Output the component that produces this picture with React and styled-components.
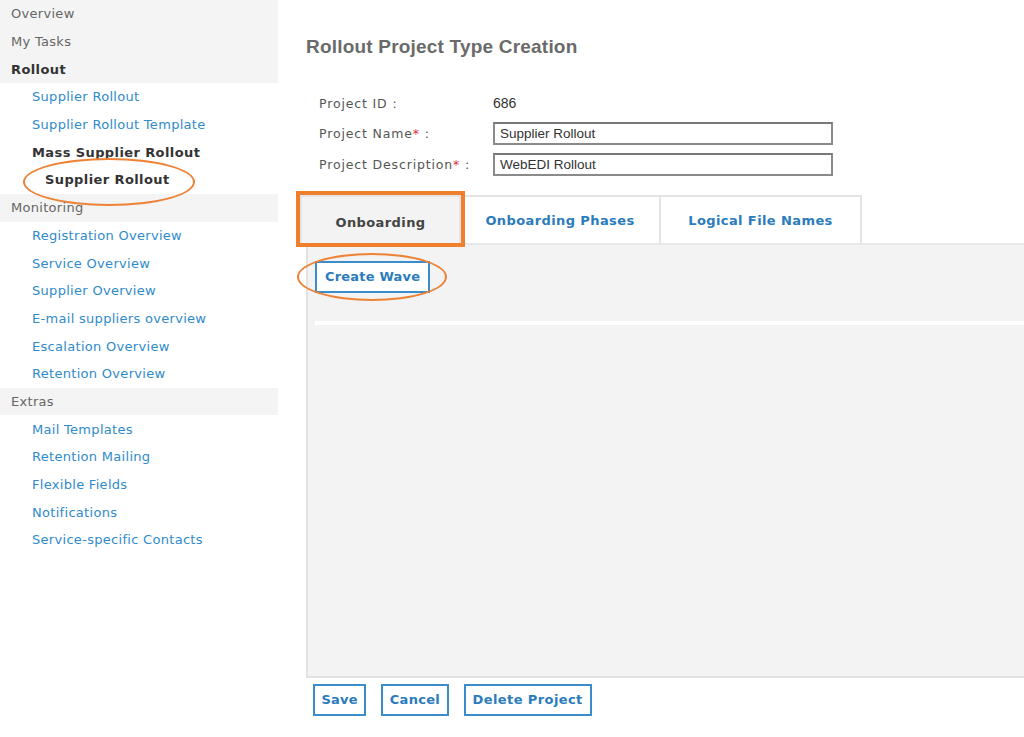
import React from 'react'
import styled, { createGlobalStyle } from 'styled-components'

const Global = createGlobalStyle`
  html, body { margin: 0; padding: 0; background: #fff; }
  body { font-family: "DejaVu Sans", Verdana, sans-serif; }
`

const Page = styled.div`
  display: flex;
  width: 1024px;
  height: 737px;
  overflow: hidden;
`

const Sidebar = styled.nav`
  width: 278px;
  flex-shrink: 0;
  display: flex;
  flex-direction: column;
`

const Group = styled.div`
  background: #f4f4f4;
`

const Item = styled.div`
  position: relative;
  height: 27.7px;
  display: flex;
  align-items: center;
  padding-left: ${p => p.indent || 11}px;
  font-size: 13px;
  letter-spacing: ${p => (p.strong ? 0.4 : 0.3)}px;
  white-space: nowrap;
  color: ${p => (p.link ? '#2f8bcb' : p.strong ? '#333' : '#666')};
  font-weight: ${p => (p.strong ? 'bold' : 'normal')};
`

const Ring = styled.span`
  position: absolute;
  border: 2px solid #ee8236;
  border-radius: 50%;
  pointer-events: none;
`

const Main = styled.main`
  flex: 1;
  display: flex;
  flex-direction: column;
  padding-left: 28px;
  padding-top: 36px;
`

const Title = styled.h1`
  margin: 0;
  font-family: "Liberation Sans", Arial, sans-serif;
  font-size: 19px;
  font-weight: bold;
  letter-spacing: 0.2px;
  color: #6a6a6a;
  line-height: 22px;
`

const Form = styled.div`
  display: grid;
  grid-template-columns: 174px 340px;
  grid-auto-rows: 30.5px;
  align-items: center;
  margin: 30px 0 0 13px;
`

const Label = styled.span`
  font-size: 12.5px;
  color: #555;
  letter-spacing: 0.85px;
`

const Star = styled.span`
  color: #e0303a;
`

const Value = styled.span`
  font-family: "Liberation Sans", Arial, sans-serif;
  font-size: 14px;
  color: #333;
`

const Input = styled.div`
  height: 23px;
  box-sizing: border-box;
  border: 2px solid #8a8a8a;
  border-top-color: #777;
  padding: 0 5px;
  display: flex;
  align-items: center;
  font-family: "Liberation Sans", Arial, sans-serif;
  font-size: 13.5px;
  color: #333;
`

const Tabs = styled.div`
  display: flex;
  margin: 15px 0 0 -6px;
  height: 48px;
`

const Tab = styled.div`
  position: relative;
  width: ${p => p.w}px;
  box-sizing: border-box;
  display: flex;
  align-items: center;
  justify-content: center;
  padding-top: ${p => (p.active ? 5 : 2)}px;
  border: 2px solid #e4e4e4;
  border-bottom: none;
  border-left-width: ${p => (p.first ? 2 : 0)}px;
  background: ${p => (p.active ? '#f3f3f3' : '#fff')};
  color: ${p => (p.active ? '#444' : '#2b7cbc')};
  font-size: 13px;
  font-weight: bold;
  letter-spacing: 0.4px;
  ${p => p.active && `outline: 4px solid #ef7f2c; outline-offset: 0; z-index: 1;`}
`

const Panel = styled.section`
  height: 435px;
  background: #f3f3f3;
  border-left: 2px solid #e2e2e2;
  border-bottom: 2px solid #e2e2e2;
  border-top: 2px solid #e8e8e8;
  box-sizing: border-box;
  padding: 16px 0 0 7px;
  display: flex;
  flex-direction: column;
  align-items: flex-start;
`

const Button = styled.button`
  position: relative;
  height: 32px;
  box-sizing: border-box;
  padding: 0 ${p => p.px || 6}px;
  background: #fff;
  border: 2px solid #3b8ccb;
  color: #2b7cbc;
  font-family: "DejaVu Sans", Verdana, sans-serif;
  font-size: 13px;
  font-weight: bold;
  letter-spacing: ${p => p.ls ?? 0.2}px;
  cursor: pointer;
`

const Divider = styled.div`
  align-self: stretch;
  height: 4px;
  background: #fff;
  margin-top: 28px;
`

const Actions = styled.div`
  display: flex;
  gap: 15px;
  margin: 6px 0 0 7px;
`

const topGroup = ['Overview', 'My Tasks']
const rollout = ['Supplier Rollout', 'Supplier Rollout Template']
const monitoring = [
  'Registration Overview',
  'Service Overview',
  'Supplier Overview',
  'E-mail suppliers overview',
  'Escalation Overview',
  'Retention Overview',
]
const extras = [
  'Mail Templates',
  'Retention Mailing',
  'Flexible Fields',
  'Notifications',
  'Service-specific Contacts',
]

export default function App() {
  return (
    <Page>
      <Global />
      <Sidebar>
        <Group>
          {topGroup.map(t => <Item key={t}>{t}</Item>)}
          <Item strong>Rollout</Item>
        </Group>
        {rollout.map(t => <Item key={t} link indent={32}>{t}</Item>)}
        <Item strong indent={32}>Mass Supplier Rollout</Item>
        <Item strong indent={45}>
          Supplier Rollout
          <Ring style={{ left: 23, top: -8, width: 168, height: 44 }} />
        </Item>
        <Group><Item>Monitoring</Item></Group>
        {monitoring.map(t => <Item key={t} link indent={32}>{t}</Item>)}
        <Group><Item>Extras</Item></Group>
        {extras.map(t => <Item key={t} link indent={32}>{t}</Item>)}
      </Sidebar>

      <Main>
        <Title>Rollout Project Type Creation</Title>
        <Form>
          <Label>Project ID :</Label>
          <Value>686</Value>
          <Label>Project Name<Star>*</Star> :</Label>
          <Input>Supplier Rollout</Input>
          <Label>Project Description<Star>*</Star> :</Label>
          <Input>WebEDI Rollout</Input>
        </Form>

        <Tabs>
          <Tab active first w={161}>Onboarding</Tab>
          <Tab w={200}>Onboarding Phases</Tab>
          <Tab w={201}>Logical File Names</Tab>
        </Tabs>

        <Panel>
          <Button px={8}>
            Create Wave
            <Ring style={{ left: -20, top: -10, width: 146, height: 44 }} />
          </Button>
          <Divider />
        </Panel>

        <Actions>
          <Button px={6.5} ls={0.2}>Save</Button>
          <Button px={6.5} ls={0.3}>Cancel</Button>
          <Button px={7} ls={0.4}>Delete Project</Button>
        </Actions>
      </Main>
    </Page>
  )
}
